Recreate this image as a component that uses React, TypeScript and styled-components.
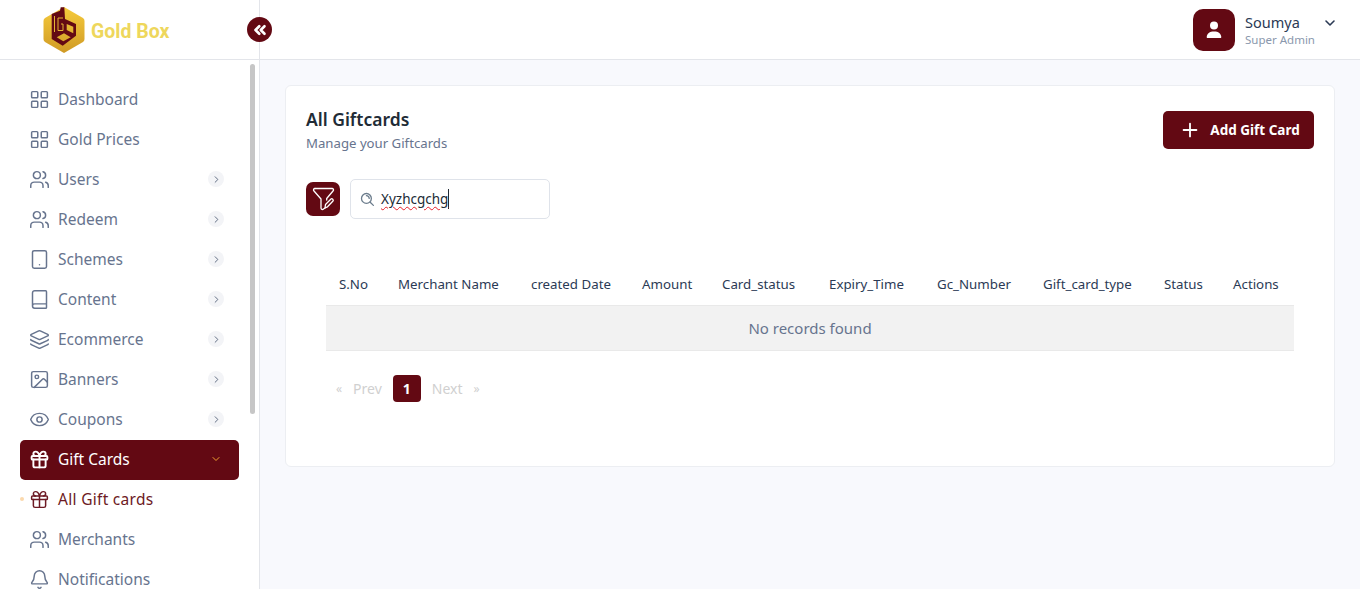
import { ReactNode } from 'react';
import styled, { createGlobalStyle } from 'styled-components';
import { Bell, Book, ChevronDown, ChevronRight, ChevronsLeft, Eye, Gift, Image, Layers, LayoutGrid, Plus, Tablet, Users } from 'lucide-react';

const MAROON = '#630913';
const FONT = '"Noto Sans", "Open Sans", sans-serif';

const GlobalStyle = createGlobalStyle`
  html, body {
    margin: 0;
    height: 100%;
    overflow: hidden;
    background: #f8f9fd;
    font-family: ${FONT};
  }
  * {
    box-sizing: border-box;
  }
`;

function Logo() {
  return (
    <svg width="42" height="48" viewBox="0 0 42 48">
      <defs>
        <linearGradient id="hex" x1="0" y1="0" x2="0" y2="1">
          <stop offset="0" stopColor="#f6cb3c" />
          <stop offset="1" stopColor="#cf9a25" />
        </linearGradient>
      </defs>
      <path d="M21 1 L40 12 Q41.500 13 41.500 15 V33 Q41.500 35 40 36 L21 47 L2 36 Q0.500 35 0.500 33 V15 Q0.500 13 2 12 Z" fill="url(#hex)" />
      <path
        d="M8.700 8 L17 4.700 L17.700 1.300 H21.300 L22 13 L33 18 V29.700 L19.700 39.700 L8.700 33 Z M13.700 31.300 L20.300 35.300 L27.700 31.300 L21 27.300 Z M23.700 18 V24 L30.300 27.300 V20.700 Z"
        fill={MAROON}
        fillRule="evenodd"
      />
      <path d="M11.500 10 V26 M15 12 H20 M15 12 V24.500 H20 V18 H18" fill="none" stroke="#e5b334" strokeWidth="1" />
    </svg>
  );
}

function FilterPen() {
  return (
    <svg width="23" height="24" viewBox="0 0 23 24" fill="none" stroke="#fff" strokeWidth="1.300" strokeLinecap="round" strokeLinejoin="round">
      <path d="M3 1.500 H20 C21.500 1.500 22 3 21 4 L14.700 11.500 V13" />
      <path d="M3 1.500 C1.500 1.500 1 3 2 4 L9 12 V21 C9 22.500 10.500 23 11.500 22 L13 21" />
      <path d="M13 21 L13.500 17.500 L19 12 C20 11 22 13 21 14 L15.500 19.800 Z" />
    </svg>
  );
}

function SearchGlyph() {
  return (
    <svg width="15" height="15" viewBox="0 0 14 14" fill="none" stroke="#6b7c8c" strokeWidth="1.200" strokeLinecap="round">
      <circle cx="6" cy="6" r="4.600" />
      <path d="M9.500 9.500 L12.500 12.500" />
      <path d="M6 3.400 A2.600 2.600 0 0 1 8.600 6" />
    </svg>
  );
}

function UserGlyph() {
  return (
    <svg width="16" height="18" viewBox="0 0 16 18" fill="#fff">
      <circle cx="8" cy="4.500" r="4" />
      <path d="M1.500 17 C1 17 0.600 16.500 0.700 16 C1 12.500 3.500 10.500 8 10.500 C12.500 10.500 15 12.500 15.300 16 C15.400 16.500 15 17 14.500 17 Z" />
    </svg>
  );
}

const Topbar = styled.header`
  height: 60px;
  display: flex;
  background: #fff;
  border-bottom: 1px solid #e3e5ea;
`;

const Brand = styled.div`
  position: relative;
  width: 260px;
  display: flex;
  align-items: center;
  gap: 6px;
  padding: 1px 0 0 43px;
  border-right: 1px solid #e3e5ea;
`;

const BrandName = styled.span`
  padding-top: 2px;
  font-family: Roboto, sans-serif;
  font-size: 19.500px;
  font-weight: 700;
  color: #eed75c;
`;

const Collapse = styled.button`
  position: absolute;
  top: 17px;
  right: -13px;
  width: 25px;
  height: 25px;
  padding: 0;
  border: 0;
  border-radius: 50%;
  background: ${MAROON};
  color: #fff;
  display: flex;
  align-items: center;
  justify-content: center;
`;

const Profile = styled.div`
  margin-left: auto;
  padding: 9px 22px 0 0;
  display: flex;
  gap: 10px;
`;

const Avatar = styled.div`
  width: 42px;
  height: 42px;
  border-radius: 10px;
  background: ${MAROON};
  display: flex;
  align-items: center;
  justify-content: center;
`;

const ProfileText = styled.div`
  width: 67px;
  padding-top: 4px;
`;

const ProfileName = styled.div`
  font-size: 14.500px;
  line-height: 18px;
  color: #2b3a55;
`;

const ProfileRole = styled.div`
  font-size: 11.500px;
  line-height: 18px;
  color: #8a98ad;
  white-space: nowrap;
`;

const ProfileCaret = styled.div`
  padding-top: 5px;
  color: #2b3a55;
`;

const Body = styled.div`
  height: 529px;
  display: flex;
`;

const Sidebar = styled.nav`
  position: relative;
  width: 260px;
  flex: none;
  padding: 20px 20px 0;
  background: #fff;
  border-right: 1px solid #e3e5ea;
  overflow: hidden;
`;

const ScrollThumb = styled.div`
  position: absolute;
  top: 4px;
  left: 250px;
  width: 5px;
  height: 350px;
  border-radius: 3px;
  background: #c6c6c6;
`;

const MenuRow = styled.div<{ $active?: boolean; $current?: boolean }>`
  position: relative;
  height: 40px;
  display: flex;
  align-items: center;
  gap: 8px;
  padding: 0 15px 2px 9px;
  border-radius: 5px;
  font-size: 15.500px;
  letter-spacing: ${(p) => (p.$current ? '0.3px' : '0')};
  background: ${(p) => (p.$active ? MAROON : 'transparent')};
  color: ${(p) => (p.$active ? '#fff' : p.$current ? '#6d1a24' : '#67748e')};
`;

const MenuIcon = styled.span`
  width: 21px;
  display: flex;
  justify-content: center;
`;

const MenuLabel = styled.span`
  flex: 1;
`;

const Bubble = styled.span`
  width: 16px;
  height: 16px;
  border-radius: 50%;
  background: #f3f4f7;
  color: #55627a;
  display: flex;
  align-items: center;
  justify-content: center;
`;

const CaretBox = styled.span`
  width: 16px;
  display: flex;
  justify-content: center;
  color: #f0a030;
`;

const Dot = styled.span`
  position: absolute;
  left: 0;
  top: 17px;
  width: 4px;
  height: 4px;
  border-radius: 50%;
  background: #fbd9ad;
`;

const Main = styled.main`
  flex: 1;
  padding: 25px 25px 0 25px;
  background: #f8f9fd;
`;

const Card = styled.section`
  height: 382px;
  padding: 20px 20px 0;
  background: #fff;
  border: 1px solid #eceef2;
  border-radius: 6px;
`;

const CardHead = styled.div`
  display: flex;
  justify-content: space-between;
  align-items: flex-start;
`;

const Title = styled.h1`
  margin: 0;
  font-size: 17.500px;
  line-height: 27px;
  font-weight: 600;
  color: #212b36;
`;

const Subtitle = styled.p`
  margin: 0;
  font-size: 13.200px;
  line-height: 20px;
  color: #67748e;
`;

const AddButton = styled.button`
  width: 151px;
  height: 38px;
  margin-top: 5px;
  padding: 0 0 0 2px;
  border: 0;
  border-radius: 5px;
  background: ${MAROON};
  color: #fff;
  font-family: ${FONT};
  font-size: 13.500px;
  font-weight: 700;
  white-space: nowrap;
  display: flex;
  align-items: center;
  justify-content: center;
  gap: 9px;
`;

const FilterRow = styled.div`
  margin-top: 26px;
  display: flex;
  align-items: center;
  gap: 10px;
`;

const FilterButton = styled.button`
  width: 34px;
  height: 34px;
  padding: 0;
  border: 0;
  border-radius: 7px;
  background: ${MAROON};
  display: flex;
  align-items: center;
  justify-content: center;
`;

const SearchBox = styled.div`
  width: 200px;
  height: 40px;
  padding: 0 0 0 9px;
  display: flex;
  align-items: center;
  gap: 6px;
  border: 1px solid #dfe3ea;
  border-radius: 5px;
  font-size: 13.500px;
  color: #212b36;
`;

const Typed = styled.span`
  text-decoration: underline wavy #e8202a 1px;
  text-underline-offset: 2px;
  border-right: 1px solid #212b36;
  line-height: 20px;
`;

const Table = styled.table`
  width: 968px;
  margin: 45px 0 0 20px;
  table-layout: fixed;
  border-collapse: collapse;
`;

const Th = styled.th`
  height: 41px;
  padding: 0 0 0 13px;
  text-align: left;
  font-size: 13.300px;
  font-weight: 400;
  color: #2b3a55;
  white-space: nowrap;
  border-bottom: 1px solid #e9e9e9;
`;

const EmptyCell = styled.td`
  height: 45px;
  text-align: center;
  font-size: 15px;
  color: #67748e;
  background: #f2f2f2;
  border-bottom: 1px solid #e9e9e9;
`;

const Pager = styled.div`
  margin: 24px 0 0 20px;
  display: flex;
  align-items: center;
  height: 27px;
  padding-left: 10px;
  font-size: 14px;
  color: #d0d0d0;
`;

const PagerGlyph = styled.span`
  font-size: 12px;
`;

const PagerWord = styled.span`
  margin: 0 11px;
`;

const PageNumber = styled.span`
  width: 28px;
  height: 27px;
  border-radius: 4px;
  background: ${MAROON};
  color: #fff;
  font-weight: 700;
  display: flex;
  align-items: center;
  justify-content: center;
`;

type Item = { label: string; icon: ReactNode; more?: boolean };

const size = { size: 21, strokeWidth: 1.700 };

const items: Item[] = [
  { label: 'Dashboard', icon: <LayoutGrid {...size} /> },
  { label: 'Gold Prices', icon: <LayoutGrid {...size} /> },
  { label: 'Users', icon: <Users {...size} />, more: true },
  { label: 'Redeem', icon: <Users {...size} />, more: true },
  { label: 'Schemes', icon: <Tablet {...size} />, more: true },
  { label: 'Content', icon: <Book {...size} />, more: true },
  { label: 'Ecommerce', icon: <Layers {...size} />, more: true },
  { label: 'Banners', icon: <Image {...size} />, more: true },
  { label: 'Coupons', icon: <Eye {...size} />, more: true },
];

const columns = [
  ['S.No', 59],
  ['Merchant Name', 133],
  ['created Date', 111],
  ['Amount', 80],
  ['Card_status', 107],
  ['Expiry_Time', 108],
  ['Gc_Number', 106],
  ['Gift_card_type', 121],
  ['Status', 69],
  ['Actions', 74],
] as const;

export default function App() {
  return (
    <>
      <GlobalStyle />
      <Topbar>
        <Brand>
          <Logo />
          <BrandName>Gold Box</BrandName>
          <Collapse>
            <ChevronsLeft size={18} strokeWidth={3.500} />
          </Collapse>
        </Brand>
        <Profile>
          <Avatar>
            <UserGlyph />
          </Avatar>
          <ProfileText>
            <ProfileName>Soumya</ProfileName>
            <ProfileRole>Super Admin</ProfileRole>
          </ProfileText>
          <ProfileCaret>
            <ChevronDown size={16} strokeWidth={2.400} />
          </ProfileCaret>
        </Profile>
      </Topbar>
      <Body>
        <Sidebar>
          <ScrollThumb />
          {items.map((item) => (
            <MenuRow key={item.label}>
              <MenuIcon>{item.icon}</MenuIcon>
              <MenuLabel>{item.label}</MenuLabel>
              {item.more ? (
                <Bubble>
                  <ChevronRight size={11} strokeWidth={2} />
                </Bubble>
              ) : null}
            </MenuRow>
          ))}
          <MenuRow $active>
            <MenuIcon>
              <Gift {...size} strokeWidth={2.200} />
            </MenuIcon>
            <MenuLabel>Gift Cards</MenuLabel>
            <CaretBox>
              <ChevronDown size={12} strokeWidth={2} />
            </CaretBox>
          </MenuRow>
          <MenuRow $current>
            <Dot />
            <MenuIcon>
              <Gift {...size} />
            </MenuIcon>
            <MenuLabel>All Gift cards</MenuLabel>
          </MenuRow>
          <MenuRow>
            <MenuIcon>
              <Users {...size} />
            </MenuIcon>
            <MenuLabel>Merchants</MenuLabel>
          </MenuRow>
          <MenuRow>
            <MenuIcon>
              <Bell {...size} />
            </MenuIcon>
            <MenuLabel>Notifications</MenuLabel>
          </MenuRow>
        </Sidebar>
        <Main>
          <Card>
            <CardHead>
              <div>
                <Title>All Giftcards</Title>
                <Subtitle>Manage your Giftcards</Subtitle>
              </div>
              <AddButton>
                <Plus size={22} strokeWidth={2} />
                Add Gift Card
              </AddButton>
            </CardHead>
            <FilterRow>
              <FilterButton>
                <FilterPen />
              </FilterButton>
              <SearchBox>
                <SearchGlyph />
                <Typed>Xyzhcgchg</Typed>
              </SearchBox>
            </FilterRow>
            <Table>
              <colgroup>
                {columns.map(([name, width]) => (
                  <col key={name} width={width} />
                ))}
              </colgroup>
              <thead>
                <tr>
                  {columns.map(([name]) => (
                    <Th key={name}>{name}</Th>
                  ))}
                </tr>
              </thead>
              <tbody>
                <tr>
                  <EmptyCell colSpan={10}>No records found</EmptyCell>
                </tr>
              </tbody>
            </Table>
            <Pager>
              <PagerGlyph>«</PagerGlyph>
              <PagerWord>Prev</PagerWord>
              <PageNumber>1</PageNumber>
              <PagerWord>Next</PagerWord>
              <PagerGlyph>»</PagerGlyph>
            </Pager>
          </Card>
        </Main>
      </Body>
    </>
  );
}
